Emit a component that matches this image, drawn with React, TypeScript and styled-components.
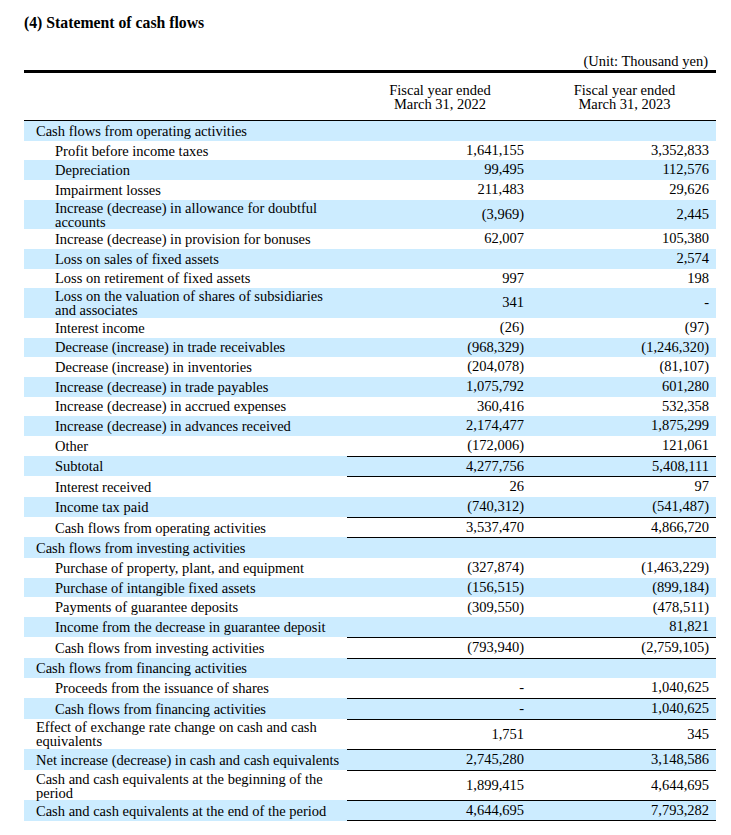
import React from 'react';
import styled, { createGlobalStyle } from 'styled-components';

const GlobalStyle = createGlobalStyle`
  html, body { margin: 0; padding: 0; background: #ffffff; }
  body {
    font-family: "Liberation Serif", "Times New Roman", serif;
    color: #000000;
  }
`;

const COLS = '323px 184px 185px';
const SHADE = '#ccecff';

const Page = styled.div`
  padding: 14px 0 0 24px;
`;

const Sheet = styled.div`
  width: 692px;
`;

const Title = styled.h1`
  margin: 0;
  font-size: 15.75px;
  line-height: 18px;
  font-weight: 700;
`;

const Unit = styled.div`
  margin-top: 23px;
  padding: 0 8px 2px 0;
  text-align: right;
  font-size: 14.5px;
  line-height: 13px;
`;

const HeaderRow = styled.div`
  display: grid;
  grid-template-columns: ${COLS};
  height: 47px;
  border-top: 3px solid #000;
  border-bottom: 1px solid #000;
`;

const HeaderCell = styled.div`
  display: flex;
  flex-direction: column;
  justify-content: center;
  align-items: center;
  padding-left: 2px;
  text-align: center;
  font-size: 14.5px;
  line-height: 14px;
`;

const Row = styled.div<{ $shaded: boolean }>`
  display: grid;
  grid-template-columns: ${COLS};
  background: ${(p) => (p.$shaded ? SHADE : 'transparent')};
`;

const LabelCell = styled.div<{ $section: boolean; $ruled: boolean }>`
  box-sizing: border-box;
  display: flex;
  align-items: center;
  min-height: ${(p) => (p.$ruled ? 20.7 : 19.7)}px;
  padding: 0.75px 4px 0.75px ${(p) => (p.$section ? 12 : 31)}px;
  border-top: ${(p) => (p.$ruled ? '1px solid transparent' : 'none')};
  font-size: 14.5px;
  line-height: 14px;
  white-space: nowrap;
`;

const LabelText = styled.span`
  display: block;
`;

const NumCell = styled.div<{ $ruled: boolean; $last: boolean }>`
  box-sizing: border-box;
  display: flex;
  align-items: center;
  justify-content: flex-end;
  min-height: ${(p) => (p.$ruled ? 20.7 : 19.7)}px;
  padding-right: 7px;
  border-top: ${(p) => (p.$ruled ? '1px solid #000' : 'none')};
  border-bottom: ${(p) => (p.$last ? '1px solid #000' : 'none')};
  font-size: 14.5px;
  line-height: 13.5px;
  white-space: nowrap;
`;

type Line = {
  label: string[];
  section?: boolean;
  a?: string;
  b?: string;
  ruled?: boolean;
};

const rows: Line[] = [
  { label: ['Cash flows from operating activities'], section: true },
  { label: ['Profit before income taxes'], a: '1,641,155', b: '3,352,833' },
  { label: ['Depreciation'], a: '99,495', b: '112,576' },
  { label: ['Impairment losses'], a: '211,483', b: '29,626' },
  { label: ['Increase (decrease) in allowance for doubtful', 'accounts'], a: '(3,969)', b: '2,445' },
  { label: ['Increase (decrease) in provision for bonuses'], a: '62,007', b: '105,380' },
  { label: ['Loss on sales of fixed assets'], a: '', b: '2,574' },
  { label: ['Loss on retirement of fixed assets'], a: '997', b: '198' },
  { label: ['Loss on the valuation of shares of subsidiaries', 'and associates'], a: '341', b: '-' },
  { label: ['Interest income'], a: '(26)', b: '(97)' },
  { label: ['Decrease (increase) in trade receivables'], a: '(968,329)', b: '(1,246,320)' },
  { label: ['Decrease (increase) in inventories'], a: '(204,078)', b: '(81,107)' },
  { label: ['Increase (decrease) in trade payables'], a: '1,075,792', b: '601,280' },
  { label: ['Increase (decrease) in accrued expenses'], a: '360,416', b: '532,358' },
  { label: ['Increase (decrease) in advances received'], a: '2,174,477', b: '1,875,299' },
  { label: ['Other'], a: '(172,006)', b: '121,061' },
  { label: ['Subtotal'], a: '4,277,756', b: '5,408,111', ruled: true },
  { label: ['Interest received'], a: '26', b: '97', ruled: true },
  { label: ['Income tax paid'], a: '(740,312)', b: '(541,487)' },
  { label: ['Cash flows from operating activities'], a: '3,537,470', b: '4,866,720', ruled: true },
  { label: ['Cash flows from investing activities'], section: true, ruled: true },
  { label: ['Purchase of property, plant, and equipment'], a: '(327,874)', b: '(1,463,229)' },
  { label: ['Purchase of intangible fixed assets'], a: '(156,515)', b: '(899,184)' },
  { label: ['Payments of guarantee deposits'], a: '(309,550)', b: '(478,511)' },
  { label: ['Income from the decrease in guarantee deposit'], a: '', b: '81,821' },
  { label: ['Cash flows from investing activities'], a: '(793,940)', b: '(2,759,105)', ruled: true },
  { label: ['Cash flows from financing activities'], section: true, ruled: true },
  { label: ['Proceeds from the issuance of shares'], a: '-', b: '1,040,625' },
  { label: ['Cash flows from financing activities'], a: '-', b: '1,040,625', ruled: true },
  { label: ['Effect of exchange rate change on cash and cash', 'equivalents'], section: true, a: '1,751', b: '345', ruled: true },
  { label: ['Net increase (decrease) in cash and cash equivalents'], section: true, a: '2,745,280', b: '3,148,586', ruled: true },
  { label: ['Cash and cash equivalents at the beginning of the', 'period'], section: true, a: '1,899,415', b: '4,644,695', ruled: true },
  { label: ['Cash and cash equivalents at the end of the period'], section: true, a: '4,644,695', b: '7,793,282', ruled: true },
];

export default function App() {
  return (
    <>
      <GlobalStyle />
      <Page>
        <Sheet>
          <Title>(4) Statement of cash flows</Title>
          <Unit>(Unit: Thousand yen)</Unit>
          <HeaderRow>
            <HeaderCell />
            <HeaderCell>
              <span>Fiscal year ended</span>
              <span>March 31, 2022</span>
            </HeaderCell>
            <HeaderCell>
              <span>Fiscal year ended</span>
              <span>March 31, 2023</span>
            </HeaderCell>
          </HeaderRow>
          {rows.map((r, i) => {
            const ruled = !!r.ruled;
            const last = i === rows.length - 1;
            return (
              <Row key={i} $shaded={i % 2 === 0}>
                <LabelCell $section={!!r.section} $ruled={ruled}>
                  <LabelText>
                    {r.label.map((l, j) => (
                      <React.Fragment key={j}>
                        {j > 0 && <br />}
                        {l}
                      </React.Fragment>
                    ))}
                  </LabelText>
                </LabelCell>
                <NumCell $ruled={ruled} $last={last}>{r.a ?? ''}</NumCell>
                <NumCell $ruled={ruled} $last={last}>{r.b ?? ''}</NumCell>
              </Row>
            );
          })}
        </Sheet>
      </Page>
    </>
  );
}
